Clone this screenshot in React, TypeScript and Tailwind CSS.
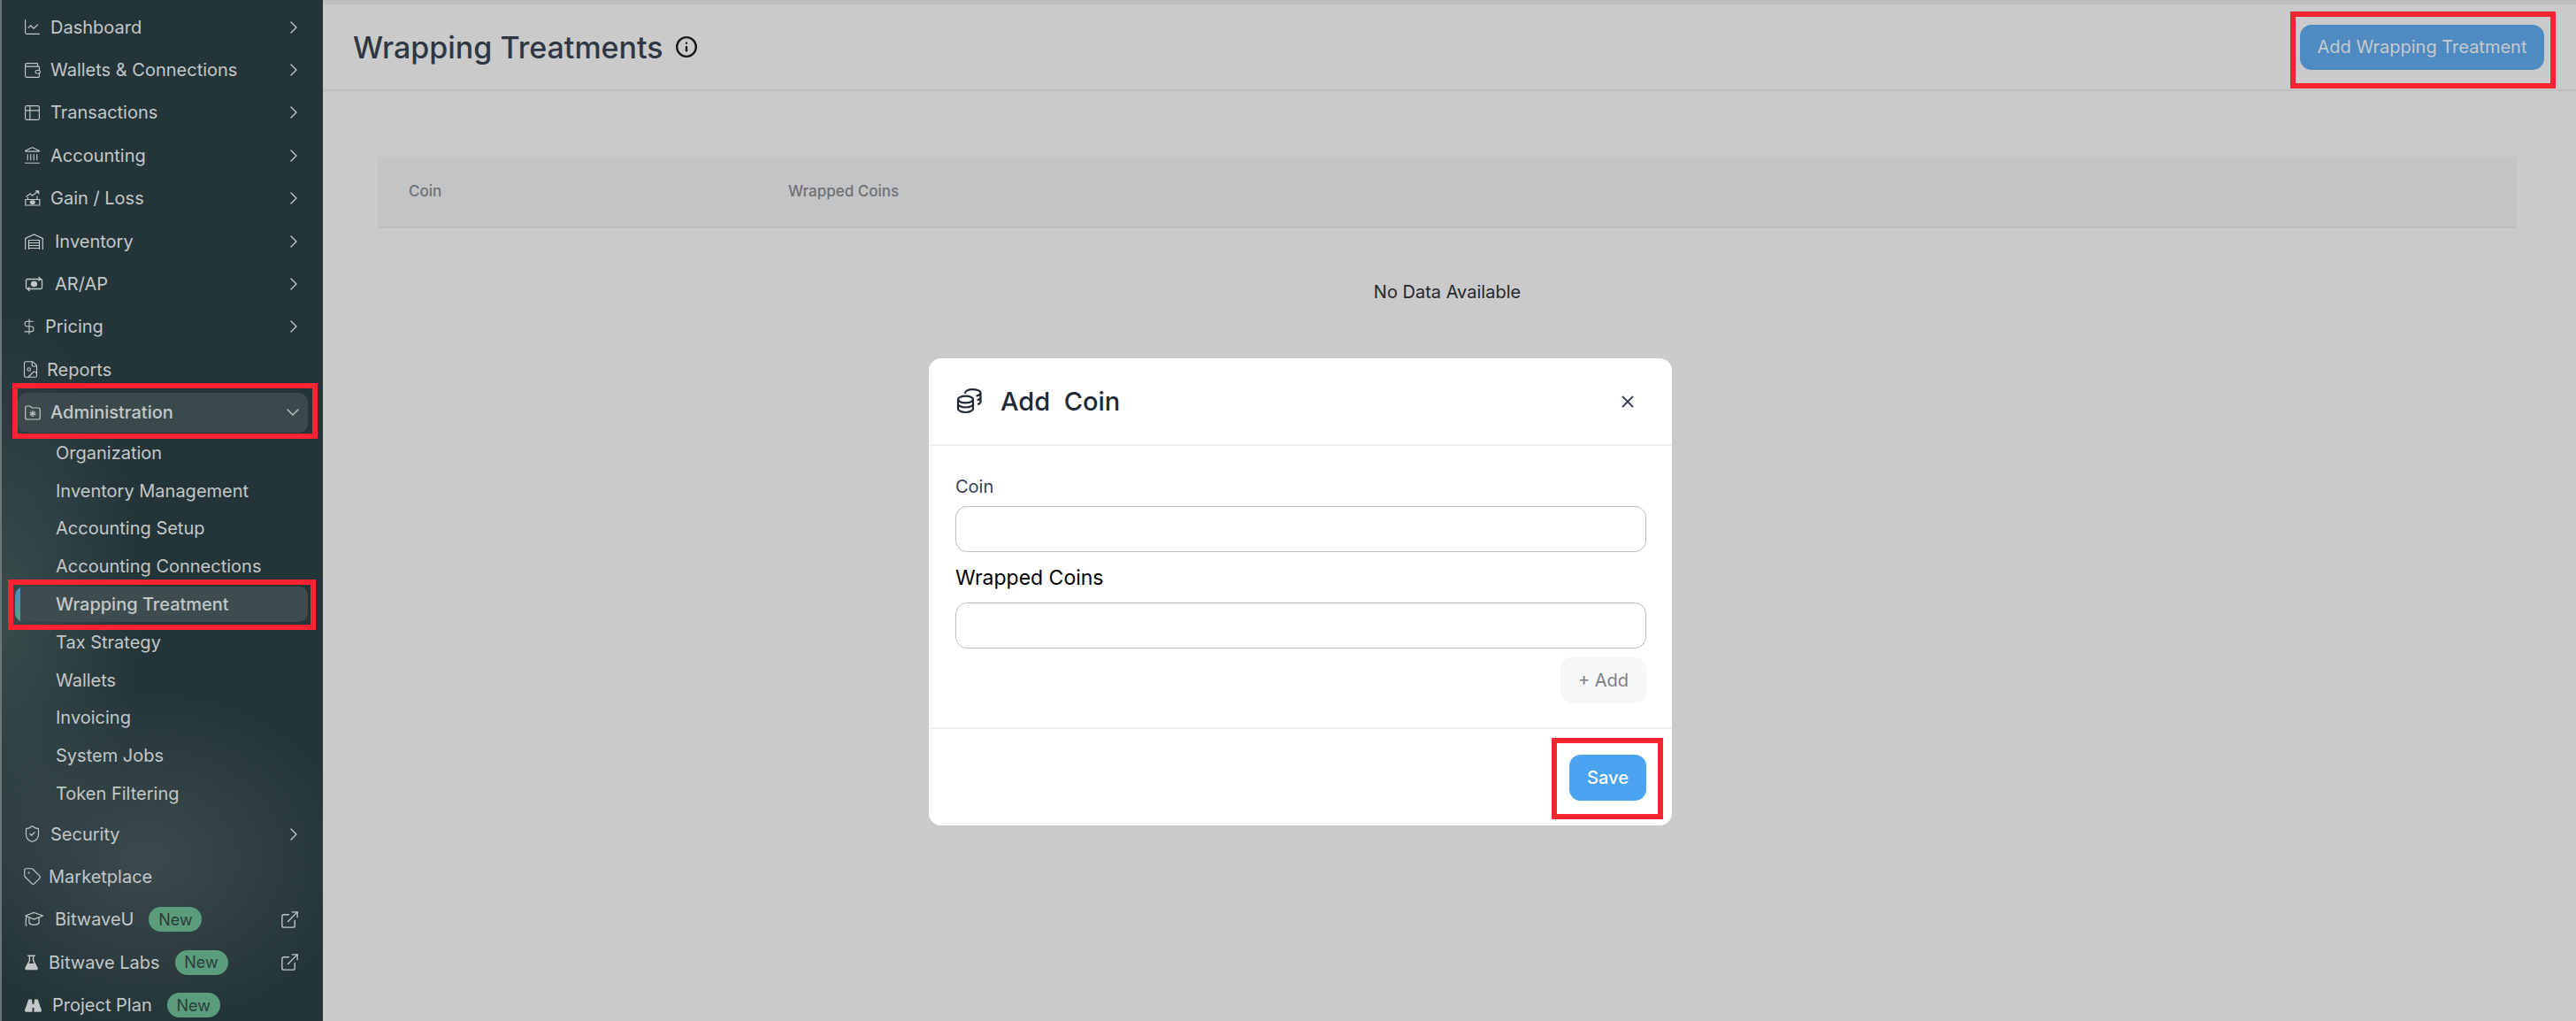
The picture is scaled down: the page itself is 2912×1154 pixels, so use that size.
import type { ReactNode } from 'react'
import {
  ChartLine,
  ChevronDown,
  ChevronRight,
  DollarSign,
  ExternalLink,
  FileImage,
  Info,
  Landmark,
  ShieldCheck,
  Table2,
  Tag,
  Wallet,
  X,
} from 'lucide-react'

// lucide glyphs have a 3 unit inset, so they are sized up and pulled left to fill the slot
const iconClass = '-ml-[2px] h-[21px] w-[21px] shrink-0'

function GainLossIcon() {
  return (
    <svg viewBox="0 0 18 18" fill="none" stroke="currentColor" strokeWidth="1.2" className="h-[18px] w-[18px] shrink-0">
      <path d="M.8 17V10.500h16V17Z" />
      <ellipse cx="8.800" cy="13.700" rx="2.400" ry="1.800" fill="currentColor" />
      <path d="M1.500 7.500 6 4l2.500 2L15.500 1M11.800.8h3.900v3.600" />
      <path d="M3.500 10.500V8M14 10.500V6.500" />
    </svg>
  )
}

function WarehouseIcon() {
  return (
    <svg viewBox="0 0 21 18" fill="none" stroke="currentColor" strokeWidth="1.200" className="h-[18px] w-[21px] shrink-0">
      <path d="M.7 18V5.500L10.500 1l9.800 4.500V18" />
      <path d="M4.500 18V7.500h12V18M4.500 10.500h12M4.500 13.500h12M4.500 16.500h12" />
    </svg>
  )
}

function CashIcon() {
  return (
    <svg viewBox="0 0 21 18" fill="none" stroke="currentColor" strokeWidth="1.300" className="h-[18px] w-[21px] shrink-0">
      <rect x="1.500" y="3.500" width="18" height="11" rx="1.500" />
      <ellipse cx="10.500" cy="9" rx="3" ry="2.500" fill="currentColor" />
      <path d="M15.500 1 18 3.500 15.500 5.500M5.500 12.500 3 14.500 5.500 17" />
    </svg>
  )
}

function FolderGearIcon() {
  return (
    <svg viewBox="0 0 18 17" fill="none" stroke="currentColor" strokeWidth="1.200" className="h-[17px] w-[18px] shrink-0">
      <path d="M.7 3c0-1.100.8-2 1.900-2h3.600l1.800 2h7.400c1.100 0 1.900.9 1.900 2v9c0 1.100-.8 2-1.900 2H2.600c-1.100 0-1.900-.9-1.900-2Z" />
      <circle cx="9" cy="9.500" r="1.200" fill="currentColor" />
      <circle cx="9" cy="9.500" r="2.700" strokeDasharray="1.800 1" strokeWidth="1.400" />
    </svg>
  )
}

function CapIcon() {
  return (
    <svg viewBox="0 0 21 18" fill="none" stroke="currentColor" strokeWidth="1.200" className="h-[18px] w-[21px] shrink-0">
      <path d="M10.500 1.500 20.500 5l-10 4L.8 5Z" />
      <path d="M5 7v6.500c2.500 2.500 8.500 2.500 11 0V7" />
      <path d="M2 5.500c-.8 3-1 6-.8 10.500h1.600" />
    </svg>
  )
}

function FlaskIcon() {
  return (
    <svg viewBox="0 0 16 18" fill="currentColor" className="h-[18px] w-[15px] shrink-0">
      <path d="M3.500 0h9v1.500H11v5l4.600 8.500c.6 1.300-.2 2.800-1.600 2.800H2c-1.400 0-2.200-1.500-1.600-2.800L5 6.500v-5H3.500Zm3 1.500v5.400L4.800 10h6.400L9.500 6.900V1.500Z" fillRule="evenodd" />
    </svg>
  )
}

function BinocularsIcon() {
  return (
    <svg viewBox="0 0 20 15" fill="currentColor" className="h-[15px] w-[19px] shrink-0">
      <path d="M4.500 0h4v3.500H9V15H1.500C.6 15 0 14.400 0 13.500c0-.3 0-.5.1-.8L3 4.500Zm7 0h4l1.500 4.500 2.900 8.200c.1.3.1.500.1.800 0 .9-.6 1.500-1.500 1.500H11V3.500h.5ZM9 6h2v4H9Z" />
    </svg>
  )
}

function CoinStackIcon() {
  return (
    <svg viewBox="0 0 30 29" fill="none" stroke="currentColor" strokeWidth="2.200" strokeLinecap="round" className="h-[29px] w-[30px] shrink-0 text-[#1f2937]">
      <ellipse cx="10.500" cy="12.500" rx="8.500" ry="3.800" />
      <path d="M2 12.500v10.500c0 2.200 3.800 4 8.500 4s8.500-1.800 8.500-4V12.500" />
      <path d="M2 17.500c0 2.200 3.800 4 8.500 4s8.500-1.800 8.500-4" />
      <path d="M10 5c0-2.200 3.800-3.800 8.500-3.800s9 1.600 9 3.800c0 1.500-1.500 2.800-4 3.400M27.500 5v5c0 1.300-1 2.300-3 3M27.500 10v5c0 1.200-.9 2.200-2.500 2.800" />
    </svg>
  )
}

type NavItem = {
  label: string
  icon: ReactNode
  iconBox: string
  badge?: boolean
  external?: boolean
  chevron?: boolean
}

const topItems: NavItem[] = [
  { label: 'Dashboard', icon: <ChartLine className={iconClass} strokeWidth={1.3} />, iconBox: 'w-[29px]', chevron: true },
  { label: 'Wallets & Connections', icon: <Wallet className={iconClass} strokeWidth={1.3} />, iconBox: 'w-[29px]', chevron: true },
  { label: 'Transactions', icon: <Table2 className={iconClass} strokeWidth={1.3} />, iconBox: 'w-[29px]', chevron: true },
  { label: 'Accounting', icon: <Landmark className={iconClass} strokeWidth={1.3} />, iconBox: 'w-[29px]', chevron: true },
  { label: 'Gain / Loss', icon: <GainLossIcon />, iconBox: 'w-[29px]', chevron: true },
  { label: 'Inventory', icon: <WarehouseIcon />, iconBox: 'w-[34px]', chevron: true },
  { label: 'AR/AP', icon: <CashIcon />, iconBox: 'w-[34px]', chevron: true },
  { label: 'Pricing', icon: <DollarSign className="-ml-[5px] h-[20px] w-[20px] shrink-0" strokeWidth={1.3} />, iconBox: 'w-[23px]', chevron: true },
  { label: 'Reports', icon: <FileImage className="-ml-[4px] h-[21px] w-[21px] shrink-0" strokeWidth={1.3} />, iconBox: 'w-[25px]' },
]

const subItems = [
  'Organization',
  'Inventory Management',
  'Accounting Setup',
  'Accounting Connections',
  'Wrapping Treatment',
  'Tax Strategy',
  'Wallets',
  'Invoicing',
  'System Jobs',
  'Token Filtering',
]

const bottomItems: NavItem[] = [
  { label: 'Security', icon: <ShieldCheck className={iconClass} strokeWidth={1.3} />, iconBox: 'w-[29px]', chevron: true },
  { label: 'Marketplace', icon: <Tag className={iconClass} strokeWidth={1.3} />, iconBox: 'w-[27px]' },
  { label: 'BitwaveU', icon: <CapIcon />, iconBox: 'w-[34px]', badge: true, external: true },
  { label: 'Bitwave Labs', icon: <FlaskIcon />, iconBox: 'w-[27px]', badge: true, external: true },
  { label: 'Project Plan', icon: <BinocularsIcon />, iconBox: 'w-[31px]', badge: true },
]

function NavRow({ item }: { item: NavItem }) {
  return (
    <div className="flex h-[48.4px] shrink-0 items-center pl-[26px] pr-[28px]">
      <span className={`flex shrink-0 items-center ${item.iconBox}`}>{item.icon}</span>
      <span className="whitespace-nowrap">{item.label}</span>
      {item.badge && (
        <span className="ml-[17px] flex h-[28px] w-[60px] items-center justify-center rounded-full bg-[#5a9c7c] text-[18px] text-[#2b3d3b]">
          New
        </span>
      )}
      {item.chevron && <ChevronRight className="ml-auto h-[24px] w-[24px] shrink-0 -mr-[7px]" strokeWidth={1.4} />}
      {item.external && <ExternalLink className="ml-auto h-[23px] w-[23px] shrink-0 -mr-[2px]" strokeWidth={1.4} />}
    </div>
  )
}

function RedBox({ className }: { className: string }) {
  return <div className={`absolute border-[6px] border-[#fb2232] ${className}`} />
}

export default function App() {
  return (
    <div className="relative flex h-[1154px] w-[2912px] overflow-hidden bg-[#cacaca] font-['Inter',sans-serif] text-[20px]">
      {/* Sidebar */}
      <aside className="flex h-full w-[365px] shrink-0 flex-col overflow-hidden border-l-2 border-[#6c7777] bg-[#24353a] bg-[radial-gradient(ellipse_240px_190px_at_45%_84%,#3a4a4d,transparent),radial-gradient(ellipse_160px_340px_at_0%_60%,#3a4b4c,transparent)] pt-[6.500px] text-[#c3c7c7]">
        {topItems.map((item) => (
          <NavRow key={item.label} item={item} />
        ))}

        <div className="flex h-[48.4px] shrink-0 items-center pl-[18px] pr-[17px]">
          <div className="flex h-[45px] w-full items-center rounded-[10px] bg-[#3a4a4c] pl-[8px] pr-[5px]">
            <span className="flex w-[29px] shrink-0 items-center">
              <FolderGearIcon />
            </span>
            <span className="font-medium">Administration</span>
            <ChevronDown className="ml-auto h-[24px] w-[24px]" strokeWidth={1.4} />
          </div>
        </div>

        <div className="flex shrink-0 flex-col">
          {subItems.map((label) =>
            label === 'Wrapping Treatment' ? (
              <div key={label} className="flex h-[42.8px] shrink-0 items-center pl-[15px] pr-[17px]">
                <div className="flex h-[40px] w-full items-center overflow-hidden rounded-[10px] bg-[#3d4d4f]">
                  <span className="h-full w-[6px] shrink-0 bg-gradient-to-b from-[#4f8bc3] to-[#5a9c7c]" />
                  <span className="ml-[40px] whitespace-nowrap font-medium">{label}</span>
                </div>
              </div>
            ) : (
              <div key={label} className="flex h-[42.8px] shrink-0 items-center pl-[61px] whitespace-nowrap">
                {label}
              </div>
            ),
          )}
        </div>

        {bottomItems.map((item) => (
          <NavRow key={item.label} item={item} />
        ))}
      </aside>

      {/* Main */}
      <main className="flex min-w-0 flex-1 flex-col">
        <div className="h-[5px] shrink-0 bg-[#bfbfbf]" />
        <header className="flex h-[98px] shrink-0 items-center justify-between border-b-2 border-[#bebebe] pl-[34px] pr-[36px]">
          <div className="flex items-center gap-[13px]">
            <h1 className="text-[34px] font-medium text-[#2f3744]">Wrapping Treatments</h1>
            <Info className="h-[26px] w-[26px] text-[#181a1c]" strokeWidth={2.2} />
          </div>
          <button className="flex h-[51px] w-[276px] items-center justify-center rounded-[13px] bg-[#4f8bc3] text-[#c6c9cb]">
            Add Wrapping Treatment
          </button>
        </header>

        <section className="pl-[62px] pr-[67px] pt-[74px]">
          <div className="flex h-[81px] items-center border-b-2 border-[#bcbdc0] bg-[#c3c4c6] pl-[35px] text-[17px] font-medium text-[#6f7175]">
            <span className="w-[429px]">Coin</span>
            <span>Wrapped Coins</span>
          </div>
          <p className="mt-[57px] text-center text-[#25282c]">No Data Available</p>
        </section>
      </main>

      {/* Modal */}
      <div className="absolute left-[1050px] top-[405px] flex h-[528px] w-[840px] flex-col rounded-[14px] bg-white">
        <div className="flex h-[99px] shrink-0 items-center border-b-2 border-[#eceef1] pl-[31px] pr-[39px]">
          <CoinStackIcon />
          <span className="ml-[20px] whitespace-pre text-[29px] font-medium text-[#1f2937]">Add  Coin</span>
          <X className="ml-auto h-[22px] w-[22px] text-[#374151]" strokeWidth={2} />
        </div>
        <div className="flex flex-1 flex-col border-b-2 border-[#eceef1] pl-[30px] pr-[29px] pt-[34px]">
          <label className="text-[20px] leading-[24px] text-[#374151]">Coin</label>
          <div className="mt-[10px] h-[52px] rounded-[13px] border border-[#bdbdc0] bg-white" />
          <label className="mt-[14px] text-[23px] leading-[30px] text-black">Wrapped Coins</label>
          <div className="mt-[13px] h-[52px] rounded-[13px] border border-[#bdbdc0] bg-white" />
          <button className="mt-[10px] flex h-[52px] w-[97px] items-center justify-center self-end rounded-[13px] bg-[#f6f7f9] text-[#7b8088]">
            + Add
          </button>
        </div>
        <div className="flex h-[109px] shrink-0 items-center justify-end pr-[29px]">
          <button className="flex h-[52px] w-[87px] items-center justify-center rounded-[13px] bg-[#4aa3f1] font-medium text-white">
            Save
          </button>
        </div>
      </div>

      {/* Annotation boxes */}
      <RedBox className="left-[14px] top-[433px] h-[63px] w-[345px]" />
      <RedBox className="left-[9px] top-[655px] h-[57px] w-[348px]" />
      <RedBox className="left-[2589px] top-[13px] h-[87px] w-[300px]" />
      <RedBox className="left-[1754px] top-[834px] h-[92px] w-[126px]" />
    </div>
  )
}
